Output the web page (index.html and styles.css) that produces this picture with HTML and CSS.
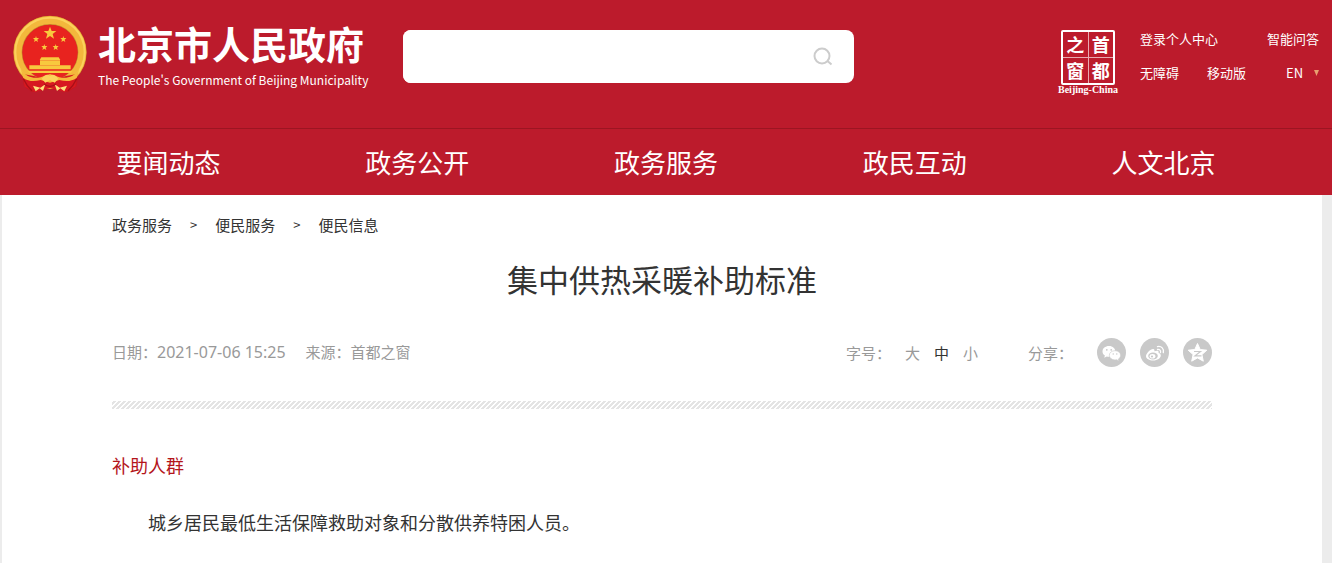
FILE: index.html
```html
<!DOCTYPE html>
<html lang="zh-CN">
	<head>
		<meta charset="utf-8">
		<title>集中供热采暖补助标准</title>
		<link rel="stylesheet" href="styles.css">
	</head>
	<body>
		<header class="header">
			<div class="top">
				<a class="logo" href="#">
					<svg class="emblem" viewBox="39 45 222 237" aria-hidden="true">
						<path d="M62 198 L72 258 L96 276 L150 266 L204 276 L230 258 L238 198Z" fill="#c8161d"/>
						<circle cx="150" cy="157" r="96" fill="none" stroke="#c98a2b" stroke-width="28"/>
						<circle cx="150" cy="157" r="97" fill="none" stroke="#f3b83c" stroke-width="24"/>
						<circle cx="150" cy="157" r="104" fill="none" stroke="#fbd25c" stroke-width="6"/>
						<circle cx="150" cy="157" r="83" fill="#e8231f"/>
						<g fill="#f8c93e">
							<path d="M150 80l5 13h14l-11 9 4 14-12-8-12 8 4-14-11-9h14z"/>
							<path d="M108 108l2 6h7l-5 5 2 7-6-4-6 4 2-7-5-5h7z"/>
							<path d="M190 108l2 6h7l-5 5 2 7-6-4-6 4 2-7-5-5h7z"/>
							<path d="M133 132l2 6h7l-5 5 2 7-6-4-6 4 2-7-5-5h7z"/>
							<path d="M167 132l2 6h7l-5 5 2 7-6-4-6 4 2-7-5-5h7z"/>
							<path d="M124 172h52l5 8h-62zM120 181h60v14h-60zM88 196h124v12H88zM82 212h136l-5 7H87z"/>
						</g>
						<path d="M68 222l34 6 28 8 20-12 20 12 28-8 34-6-6 38-32 16-44-12-44 12-32-16z" fill="#d71920"/>
						<path d="M62 208c18 26 40 28 60 24l28-10 28 10c20 4 42 2 60-24l-8 26c-18 12-34 10-52 6l-28 8-28-8c-18 4-34 6-52-6z" fill="#f5b93c"/>
						<path d="M125 236q12-17 25-9 13-8 25 9l-11 12-14-8-14 8z" fill="#fbd25c"/>
						<path d="M99 257l22 6 15-10-7 20-10-8-12 9zM201 257l-22 6-15-10 7 20 10-8 12 9z" fill="#ffe07a"/>
						<path d="M70 236q10 22 26 36M230 236q-10 22-26 36M132 252q18 14 36 0" fill="none" stroke="#a80f18" stroke-width="4"/>
					</svg>
					<span class="logo-text">
						<strong class="logo-cn">北京市人民政府</strong>
						<span class="logo-en">The People's Government of Beijing Municipality</span>
					</span>
				</a>
				<form class="search">
					<input class="search-input" type="text" aria-label="搜索">
					<button class="search-btn" type="button" aria-label="搜索">
						<svg width="20" height="20" viewBox="0 0 20 20" fill="none" stroke="#cccccc" stroke-width="2">
							<circle cx="9" cy="9" r="7.5"/>
							<path d="M14.5 14l4 3.6"/>
						</svg>
					</button>
				</form>
				<div class="tools">
					<a class="seal" href="#">
						<span class="seal-box">
							<span>之</span><span>首</span>
							<span>窗</span><span>都</span>
						</span>
						<span class="seal-name">Beijing-China</span>
					</a>
					<div class="links">
						<div class="links-row">
							<a href="#">登录个人中心</a>
							<a class="right" href="#">智能问答</a>
						</div>
						<div class="links-row">
							<a href="#">无障碍</a>
							<a href="#">移动版</a>
							<span class="lang right">
								<select class="lang-select" aria-label="Language">
									<option>EN</option>
								</select>
								<svg width="5" height="6" viewBox="0 0 5 6"><path d="M0 0h5L2.5 6z" fill="#e8a070"/></svg>
							</span>
						</div>
					</div>
				</div>
			</div>
			<nav class="nav">
				<a href="#">要闻动态</a>
				<a href="#">政务公开</a>
				<a href="#">政务服务</a>
				<a href="#">政民互动</a>
				<a href="#">人文北京</a>
			</nav>
		</header>

		<main class="main">
			<div class="crumbs">
				<a href="#">政务服务</a>
				<span class="sep">&gt;</span>
				<a href="#">便民服务</a>
				<span class="sep">&gt;</span>
				<a href="#">便民信息</a>
			</div>

			<h1 class="title">集中供热采暖补助标准</h1>

			<div class="meta">
				<div class="source">
					<span>日期：<span class="date">2021-07-06 15:25</span></span>
					<span>来源：首都之窗</span>
				</div>
				<div class="options">
					<div class="sizes">
						<span class="label">字号：</span>
						<button type="button">大</button>
						<button type="button" class="on">中</button>
						<button type="button">小</button>
					</div>
					<div class="share">
						<span class="label">分享：</span>
						<button type="button" aria-label="微信">
							<svg viewBox="0 0 29 29">
								<circle cx="14.5" cy="14.5" r="14.5" fill="#c9c9c9"/>
								<path d="M12 8c-3.8 0-6.5 2.4-6.5 5.4 0 1.800.9 3.200 2.400 4.200l-.7 2.100 2.600-1.300c2.700.8 7.700.2 8.500-4.500C18.500 10.500 15.800 8 12 8z" fill="#fff"/>
								<path d="M18 12.700c-3.200 0-5.700 2-5.700 4.600s2.500 4.600 5.700 4.600l1.700-.2 2.200 1.200-.5-1.900c1.400-.9 2.200-2.200 2.200-3.700 0-2.600-2.400-4.600-5.600-4.600z" fill="#fff" stroke="#c9c9c9" stroke-width=".6"/>
								<g fill="#c9c9c9"><circle cx="9.800" cy="11.800" r=".9"/><circle cx="14.200" cy="11.800" r=".9"/><circle cx="16.200" cy="16" r=".7"/><circle cx="19.800" cy="16" r=".7"/></g>
							</svg>
						</button>
						<button type="button" aria-label="微博">
							<svg viewBox="0 0 29 29">
								<circle cx="14.5" cy="14.5" r="14.5" fill="#c9c9c9"/>
								<path d="M13 11c-2.500.3-7 4.200-7 7.300 0 2.600 3.500 4.200 7 4.200 4.600 0 7.800-2.500 7.800-5 0-1.500-1.200-2.200-2.300-2.500.6-1.700 0-3.200-4.200-1.700.4-1.500 0-2.500-1.300-2.300z" fill="#fff"/>
								<ellipse cx="13" cy="18" rx="4.800" ry="3.400" fill="#c9c9c9"/>
								<ellipse cx="12.500" cy="18.300" rx="2.900" ry="2.300" fill="#fff"/>
								<circle cx="12" cy="18.500" r="1.100" fill="#c9c9c9"/>
								<path d="M17.500 11.500c2.200-.4 3.500 1 3 3M17.500 8.600c4-.8 6.700 2.200 5.800 6" fill="none" stroke="#fff" stroke-width="1.300" stroke-linecap="round"/>
							</svg>
						</button>
						<button type="button" aria-label="QQ空间">
							<svg viewBox="0 0 29 29">
								<circle cx="14.5" cy="14.5" r="14.5" fill="#c9c9c9"/>
								<path d="M14.500 5.500l2.700 6 6.600.7-4.900 4.400 1.400 6.600-5.800-3.300-5.800 3.300 1.400-6.600-4.900-4.400 6.600-.7z" fill="#fff" stroke="#fff" stroke-linejoin="round"/>
								<path d="M11 13.500h6.500L12 17.800h6.500" fill="none" stroke="#c9c9c9" stroke-width="1.200"/>
							</svg>
						</button>
					</div>
				</div>
			</div>

			<div class="line"></div>

			<article class="content">
				<h2>补助人群</h2>
				<p>城乡居民最低生活保障救助对象和分散供养特困人员。</p>
			</article>
		</main>
	</body>
</html>
```
FILE: styles.css
```css
* {
	box-sizing: border-box;
}

body {
	margin: 0;
	min-height: 100vh;
	display: flex;
	flex-direction: column;
	background: #ececec;
	color: #333;
	font-family: "Noto Sans CJK SC", sans-serif;
	font-size: 15px;
}

a {
	color: inherit;
	text-decoration: none;
}

button {
	padding: 0;
	border: 0;
	background: none;
	color: inherit;
	font: inherit;
	cursor: pointer;
}

/* header */
.header {
	background: #bc1b2c;
	color: #fff;
}

.top {
	display: flex;
	align-items: flex-start;
	min-height: 128px;
	padding: 15px 13px 0;
}

.logo {
	display: flex;
	flex-shrink: 0;
	gap: 11px;
	width: 390px;
}

.emblem {
	flex-shrink: 0;
	width: 74px;
	height: 79px;
}

.logo-text {
	display: flex;
	flex-direction: column;
	gap: 4px;
	padding-top: 5px;
	white-space: nowrap;
}

.logo-cn {
	font-size: 38px;
	line-height: 46px;
}

.logo-en {
	font-size: 12px;
	line-height: 20px;
}

.search {
	display: flex;
	flex: 0 1 451px;
	height: 53px;
	margin-top: 15px;
	background: #fff;
	border-radius: 8px;
	overflow: hidden;
}

.search-input {
	flex: 1;
	min-width: 0;
	padding: 0 16px;
	border: 0;
	outline: 0;
	font: inherit;
}

.search-btn {
	display: flex;
	align-items: center;
	justify-content: center;
	width: 62px;
}

.tools {
	display: flex;
	gap: 22px;
	margin-left: auto;
	padding-top: 15px;
}

.seal {
	display: flex;
	flex-direction: column;
	align-items: center;
	width: 60px;
}

.seal-box {
	display: grid;
	grid-template-columns: 1fr 1fr;
	gap: 1px;
	width: 54px;
	border: 2px solid #fff;
	border-radius: 2px;
	background: #e9a9b0;
	font-size: 18px;
	font-weight: bold;
	line-height: 25px;
	text-align: center;
}

.seal-box span {
	background: #bc1b2c;
}

.seal-name {
	font-family: "Liberation Serif", serif;
	font-size: 10px;
	font-weight: bold;
	line-height: 10px;
	white-space: nowrap;
}

.links {
	width: 179px;
	font-size: 13px;
	line-height: 18px;
}

.links-row {
	display: flex;
	gap: 28px;
	margin-bottom: 16px;
}

.right {
	margin-left: auto;
}

.lang {
	display: flex;
	align-items: center;
	gap: 10px;
}

.lang-select {
	appearance: none;
	padding: 0;
	border: 0;
	background: none;
	color: inherit;
	font: inherit;
}

.nav {
	display: flex;
	padding: 0 44px;
	border-top: 1px solid #9c1522;
	font-size: 26px;
	line-height: 66px;
}

.nav a {
	flex: 1;
	text-align: center;
}

/* page */
.main {
	flex: 1;
	margin: 0 10px 0 2px;
	padding: 19px 110px 24px;
	background: #fff;
}

.crumbs {
	display: flex;
	gap: 18px;
	line-height: 22px;
}

.sep {
	font-size: 13px;
}

.title {
	margin: 20px 0 36px;
	font-size: 31px;
	font-weight: normal;
	line-height: 46px;
	text-align: center;
}

.meta {
	display: flex;
	justify-content: space-between;
	color: #999;
	line-height: 28px;
}

.source {
	display: flex;
	gap: 20px;
}

.date {
	font-family: "Noto Sans", sans-serif;
	font-size: 16px;
}

.options,
.sizes,
.share {
	display: flex;
	align-items: center;
}

.options {
	gap: 50px;
}

.sizes,
.share {
	gap: 14px;
}

.sizes .on {
	color: #333;
}

.share .label {
	margin-right: 10px;
}

.share svg {
	display: block;
	width: 29px;
	height: 29px;
}

.line {
	height: 8px;
	margin: 34px 0 41px;
	background: linear-gradient(135deg, #fff 20%, #e4e4e4 20%, #e4e4e4 50%, #fff 50%, #fff 70%, #e4e4e4 70%);
	background-size: 5px 5px;
}

.content {
	font-size: 18px;
	line-height: 30px;
}

.content h2 {
	margin: 0 0 27px;
	color: #b4151b;
	font-size: 18px;
	font-weight: normal;
}

.content p {
	margin: 0;
	text-indent: 2em;
}
```
